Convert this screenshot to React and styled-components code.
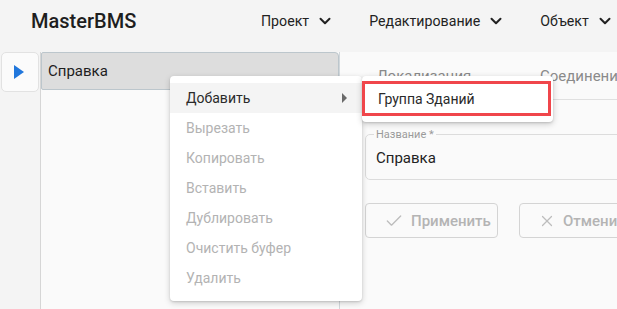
import React from 'react';
import styled, { createGlobalStyle } from 'styled-components';
import { Check, X } from 'lucide-react';

const GlobalStyle = createGlobalStyle`
  html, body {
    margin: 0;
    padding: 0;
    background: #f4f4f4;
    font-family: Roboto, "Liberation Sans", Arial, sans-serif;
    overflow: hidden;
  }
  * { box-sizing: border-box; }
`;

const Page = styled.div`
  position: relative;
  width: 617px;
  height: 309px;
  background: #f4f4f4;
  display: flex;
  flex-direction: column;
  overflow: hidden;
`;

const Header = styled.header`
  height: 45px;
  flex: none;
  display: flex;
  align-items: center;
  padding-left: 31px;
  padding-bottom: 4px;
`;

const Logo = styled.div`
  font-size: 20px;
  font-weight: 500;
  color: #1e1e1e;
  width: 230px;
  flex: none;
  white-space: nowrap;
`;

const Nav = styled.nav`
  display: flex;
  gap: 38px;
  flex: none;
  white-space: nowrap;
`;

const NavItem = styled.div`
  display: flex;
  align-items: center;
  gap: 10px;
  font-size: 14.2px;
  color: #222;
`;

const Chevron = () => (
  <svg width="12" height="12" viewBox="0 0 12 12">
    <path d="M1.5 3.8 L6 8.3 L10.5 3.8" fill="none" stroke="#222" strokeWidth="2" strokeLinecap="round" strokeLinejoin="round" />
  </svg>
);

const Body = styled.div`
  flex: 1;
  display: flex;
  padding-top: 7px;
  min-height: 0;
`;

const Rail = styled.div`
  width: 40px;
  flex: none;
  padding-left: 1px;
`;

const RailButton = styled.div`
  width: 38px;
  height: 40px;
  border: 1px solid #e2e2e2;
  border-radius: 5px;
  background: #fbfbfb;
  display: flex;
  align-items: center;
  justify-content: center;
  padding-right: 2px;
`;

const Tree = styled.div`
  width: 300px;
  flex: none;
  background: #fafafa;
  border-left: 1px solid #d6d6d6;
  border-right: 1px solid #d2d8dc;
`;

const TreeItem = styled.div`
  height: 38px;
  display: flex;
  align-items: center;
  padding-left: 6px;
  font-size: 15px;
  color: #1e1e1e;
  background: #dddddd;
  border: 1px solid #bcc6cc;
  border-radius: 2px 4px 2px 2px;
`;

const Panel = styled.div`
  flex: 1;
  background: #fafafa;
  padding-left: 25px;
`;

const Tabs = styled.div`
  display: flex;
  height: 48px;
  border-bottom: 1px solid #e0e0e0;
`;

const Tab = styled.div`
  width: 163px;
  flex: none;
  padding-left: 12px;
  display: flex;
  align-items: center;
  font-size: 15px;
  color: #8a8a8a;
  white-space: nowrap;
`;

const Field = styled.fieldset`
  margin: 29px 0 0 0;
  height: 51px;
  border: 1px solid #dcdcdc;
  border-radius: 5px;
  padding: 0 10px;
  position: relative;
  legend {
    font-size: 11px;
    color: #9a9a9a;
    padding: 0 2px;
    margin-left: -2px;
    line-height: 11px;
  }
`;

const FieldValue = styled.div`
  font-size: 15px;
  color: #222;
  margin-top: 9px;
`;

const Actions = styled.div`
  display: flex;
  gap: 21px;
  margin-top: 23px;
`;

const Button = styled.div`
  height: 35px;
  width: ${({ w }) => w}px;
  flex: none;
  display: flex;
  align-items: center;
  gap: 7px;
  padding-left: 18px;
  border: 1px solid #d4d4d4;
  border-radius: 4px;
  color: #b4b4b4;
  font-size: 15px;
  font-weight: 500;
  white-space: nowrap;
  svg { color: #bdbdbd; }
`;

const Menu = styled.div`
  position: absolute;
  left: 170px;
  top: 76px;
  width: 192px;
  padding: 7px 0 8px;
  background: #fff;
  border-radius: 4px;
  box-shadow: 0 2px 6px rgba(0,0,0,0.18), 0 1px 2px rgba(0,0,0,0.12);
`;

const MenuItem = styled.div`
  height: 30px;
  display: flex;
  align-items: center;
  justify-content: space-between;
  padding: 0 16px;
  font-size: 14px;
  color: ${({ disabled }) => (disabled ? '#b3b3b3' : '#2a2a2a')};
  background: ${({ active }) => (active ? '#f4f4f4' : 'transparent')};
`;

const Caret = styled.span`
  width: 0;
  height: 0;
  margin-right: -1px;
  border-top: 5px solid transparent;
  border-bottom: 5px solid transparent;
  border-left: 5px solid #6a6a6a;
`;

const SubMenu = styled.div`
  position: absolute;
  left: 362px;
  top: 76px;
  width: 191px;
  padding: 5px 2px 6px 0;
  background: #fff;
  border-radius: 4px;
  box-shadow: 0 2px 6px rgba(0,0,0,0.2), 0 1px 2px rgba(0,0,0,0.12);
`;

const SubItem = styled.div`
  height: 35px;
  display: flex;
  align-items: center;
  padding-left: 13px;
  font-size: 14px;
  color: #2a2a2a;
  border: 3px solid #f0464b;
`;

const menuItems = [
  'Вырезать',
  'Копировать',
  'Вставить',
  'Дублировать',
  'Очистить буфер',
  'Удалить',
];

export default function App() {
  return (
    <Page>
      <GlobalStyle />
      <Header>
        <Logo>MasterBMS</Logo>
        <Nav>
          {['Проект', 'Редактирование', 'Объект'].map((t) => (
            <NavItem key={t}>
              {t}
              <Chevron />
            </NavItem>
          ))}
        </Nav>
      </Header>
      <Body>
        <Rail>
          <RailButton>
            <svg width="10" height="14" viewBox="0 0 10 14">
              <path d="M0 0 L10 7 L0 14 Z" fill="#2177dc" />
            </svg>
          </RailButton>
        </Rail>
        <Tree>
          <TreeItem>Справка</TreeItem>
        </Tree>
        <Panel>
          <Tabs>
            <Tab>Локализация</Tab>
            <Tab>Соединения</Tab>
          </Tabs>
          <Field>
            <legend>Название *</legend>
            <FieldValue>Справка</FieldValue>
          </Field>
          <Actions>
            <Button w={133}>
              <Check size={20} strokeWidth={1.6} />
              Применить
            </Button>
            <Button w={140}>
              <X size={18} strokeWidth={1.6} />
              Отменить
            </Button>
          </Actions>
        </Panel>
      </Body>
      <Menu>
        <MenuItem active>
          Добавить
          <Caret />
        </MenuItem>
        {menuItems.map((t) => (
          <MenuItem key={t} disabled>
            {t}
          </MenuItem>
        ))}
      </Menu>
      <SubMenu>
        <SubItem>Группа Зданий</SubItem>
      </SubMenu>
    </Page>
  );
}
